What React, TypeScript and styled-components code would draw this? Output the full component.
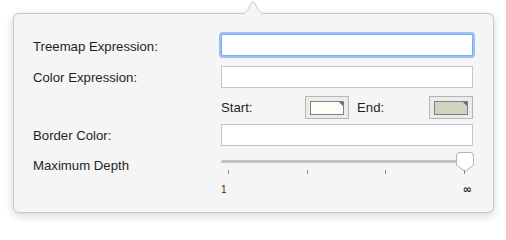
import React from 'react'
import styled, {createGlobalStyle} from "styled-components"

const GlobalStyle = createGlobalStyle`
    html, body {
        margin: 0;
        padding: 0;
        background: #ffffff;
    }
    body {
        font-family: 'Liberation Sans', Arial, sans-serif;
    }
`

const ticks = [0, 1, 2, 3]

function App() {
    return (
        <Page>
            <GlobalStyle />
            <Popover>
                <Arrow width="30" height="14" viewBox="0 0 30 14">
                    <path d="M0 13.5 C7 13.5 10 10 12.5 3 Q15 -1.5 17.5 3 C20 10 23 13.5 30 13.5 Z" fill="#f5f5f5" stroke="#c9c9c9" strokeWidth="1" />
                    <rect x="0" y="13" width="30" height="2" fill="#f5f5f5" />
                </Arrow>
                <Row $height={22} $top={20}>
                    <Label $shift={1}>Treemap Expression:</Label>
                    <TextField $focused />
                </Row>
                <Row $height={22} $top={10}>
                    <Label>Color Expression:</Label>
                    <TextField />
                </Row>
                <Row $height={23} $top={8}>
                    <span />
                    <WellGroup>
                        <SmallLabel $width={84}>Start:</SmallLabel>
                        <ColorWell>
                            <Swatch $color="#fffef6" />
                        </ColorWell>
                        <SmallLabel $grow>End:</SmallLabel>
                        <ColorWell>
                            <Swatch $color="#cdd5bf" />
                        </ColorWell>
                    </WellGroup>
                </Row>
                <Row $height={22} $top={5}>
                    <Label>Border Color:</Label>
                    <TextField />
                </Row>
                <Row $height={21} $top={6}>
                    <Label $shift={3}>Maximum Depth</Label>
                    <Slider>
                        <Track />
                        <Knob width="18" height="22" viewBox="0 0 18 22">
                            <path d="M4 0.5 H14 Q17.5 0.5 17.5 4 V13 L9 19.5 L0.5 13 V4 Q0.5 0.5 4 0.5 Z" fill="#ffffff" stroke="#b4b4b4" strokeWidth="1" />
                        </Knob>
                        <Ticks>
                            {ticks.map(t => <Tick key={t} />)}
                        </Ticks>
                    </Slider>
                </Row>
                <Row $height={12} $top={10}>
                    <span />
                    <Scale>
                        <span>1</span>
                        <Infinity>∞</Infinity>
                    </Scale>
                </Row>
            </Popover>
        </Page>
    )
}

export default App

const Page = styled.div`
    width: 506px;
    height: 226px;
    padding: 13px 0 0 13px;
    box-sizing: border-box;
`

const Popover = styled.div`
    position: relative;
    width: 481px;
    height: 200px;
    box-sizing: border-box;
    background: #f5f5f5;
    border: 1px solid #c9c9c9;
    border-radius: 6px;
    box-shadow: 0 3px 10px rgba(0,0,0,0.16), 0 0 2px rgba(0,0,0,0.06);
    padding-left: 19px;
`

const Arrow = styled.svg`
    position: absolute;
    left: 224px;
    top: -13px;
    display: block;
`

const Row = styled.div<{$height: number, $top: number}>`
    display: grid;
    grid-template-columns: 188px 252px;
    align-items: center;
    height: ${p => p.$height}px;
    margin-top: ${p => p.$top}px;
`

const Label = styled.div<{$shift?: number}>`
    font-size: 13.2px;
    color: #1f1f1f;
    padding-top: ${p => (p.$shift || 0) * 2}px;
    white-space: nowrap;
`

const TextField = styled.div<{$focused?: boolean}>`
    height: 100%;
    box-sizing: border-box;
    background: #ffffff;
    border: 1px solid ${p => p.$focused ? '#7eaef0' : '#c6c6c6'};
    box-shadow: ${p => p.$focused ? '0 0 0 2px #9ac0f3' : 'none'};
    border-radius: ${p => p.$focused ? '2px' : '0'};
`

const WellGroup = styled.div`
    display: flex;
    align-items: center;
    height: 100%;
`

const SmallLabel = styled.div<{$width?: number, $grow?: boolean}>`
    font-size: 13.2px;
    color: #1f1f1f;
    width: ${p => p.$width ? `${p.$width}px` : 'auto'};
    flex: ${p => p.$grow ? 1 : 'none'};
    margin-left: ${p => p.$grow ? '8px' : '0'};
`

const ColorWell = styled.div`
    width: 44px;
    height: 23px;
    box-sizing: border-box;
    border: 1px solid #b6b6b6;
    background: #ebebeb;
    display: flex;
    align-items: center;
    justify-content: center;
`

const Swatch = styled.div<{$color: string}>`
    position: relative;
    width: 34px;
    height: 14px;
    box-sizing: border-box;
    border: 1px solid #808080;
    background: ${p => p.$color};

    &::after {
        content: '';
        position: absolute;
        top: 0;
        right: 0;
        border-top: 4px solid #6a6a6a;
        border-left: 4px solid transparent;
    }
`

const Slider = styled.div`
    position: relative;
    height: 100%;
`

const Track = styled.div`
    position: absolute;
    left: 0;
    right: 2px;
    top: 8px;
    height: 3px;
    border-radius: 2px;
    background: #c2c2c2;
`

const Knob = styled.svg`
    position: absolute;
    right: -1px;
    top: 0;
    display: block;
    filter: drop-shadow(0 0.5px 0.5px rgba(0,0,0,0.12));
`

const Ticks = styled.div`
    position: absolute;
    left: 7px;
    right: 8px;
    top: 18px;
    display: flex;
    justify-content: space-between;
`

const Tick = styled.div`
    width: 1px;
    height: 4px;
    background: #8c8c8c;
`

const Scale = styled.div`
    display: flex;
    justify-content: space-between;
    align-items: center;
    font-size: 10px;
    color: #3a2828;
    padding-right: 1px;
`

const Infinity = styled.span`
    font-family: 'DejaVu Sans', sans-serif;
    font-size: 11px;
    font-weight: bold;
    color: #222;
`
